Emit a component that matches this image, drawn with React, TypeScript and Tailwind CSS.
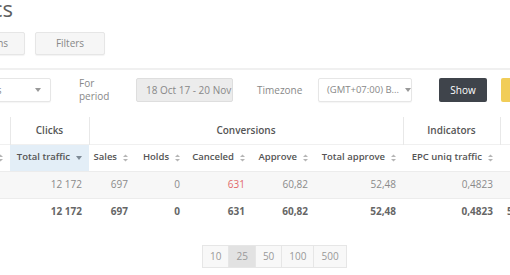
import { ReactNode } from 'react';

const font = { fontFamily: '"Open Sans", "Liberation Sans", sans-serif' };

function SortIcon({ active }: { active?: boolean }) {
  if (active) {
    return (
      <svg width="6" height="4" viewBox="0 0 6 4" className="ml-[6px] inline-block">
        <path d="M0 0h6L3 4z" fill="#7d8a96" />
      </svg>
    );
  }
  return (
    <svg width="5" height="8" viewBox="0 0 5 8" className="ml-[6px] inline-block">
      <path d="M0 3h5L2.5 0.5z" fill="#b5b5b5" />
      <path d="M0 5h5L2.5 7.5z" fill="#b5b5b5" />
    </svg>
  );
}

function Caret() {
  return (
    <svg width="6" height="4" viewBox="0 0 6 4" className="shrink-0">
      <path d="M0 0h6L3 4z" fill="#999" />
    </svg>
  );
}

const cols = [
  { key: 'traffic', label: 'Total traffic', w: 'w-[79px]', active: true },
  { key: 'sales', label: 'Sales', w: 'w-[46px]' },
  { key: 'holds', label: 'Holds', w: 'w-[52px]' },
  { key: 'canceled', label: 'Canceled', w: 'w-[65px]' },
  { key: 'approve', label: 'Approve', w: 'w-[63px]' },
  { key: 'totalApprove', label: 'Total approve', w: 'w-[88px]' },
  { key: 'epc', label: 'EPC uniq traffic', w: 'w-[97px]' },
];

const row: Record<string, string> = {
  traffic: '12 172',
  sales: '697',
  holds: '0',
  canceled: '631',
  approve: '60,82',
  totalApprove: '52,48',
  epc: '0,4823',
};

function Btn({ children, className }: { children: ReactNode; className: string }) {
  return (
    <button className={`h-[23px] rounded-[2px] border border-[#e6e6e6] bg-[#f6f6f6] text-[10px] text-[#888] shadow-[0_1px_1px_rgba(0,0,0,0.05)] ${className}`}>
      {children}
    </button>
  );
}

export default function App() {
  return (
    <div className="w-[510px] h-[275px] overflow-hidden bg-white" style={font}>
      <div className="-ml-[50px] w-[680px]">
        {/* Title */}
        <div className="-mt-[3px] flex h-[22px] w-[63px] justify-end whitespace-nowrap text-[22px] leading-[22px] text-[#5e5e5e]">
          Statistics
        </div>

        {/* Top buttons */}
        <div className="mt-[13px] flex gap-[10px]">
          <Btn className="w-[75px]">Columns</Btn>
          <Btn className="w-[70px]">Filters</Btn>
        </div>

        <div className="mt-[13px] h-[2px] bg-[#f0f0f0]" />

        {/* Filter row */}
        <div className="mt-[8px] flex h-[24px] items-center text-[10px] text-[#888]">
          <div className="ml-[5px] flex h-[24px] w-[96px] items-center justify-between rounded-[2px] border border-[#e6e6e6] bg-white pl-[10px] pr-[9px] shadow-[0_1px_1px_rgba(0,0,0,0.04)]">
            <span>By days</span>
            <Caret />
          </div>
          <div className="ml-[28px] w-[57px] leading-[13px]">
            For
            <br />
            period
          </div>
          <div className="flex h-[24px] w-[97px] items-center whitespace-nowrap rounded-[2px] border border-[#dedede] bg-[#ececec] pl-[9px]">
            18 Oct 17 - 20 Nov
          </div>
          <div className="ml-[24px] w-[61px]">Timezone</div>
          <div className="flex h-[24px] w-[94px] items-center gap-[6px] whitespace-nowrap rounded-[2px] border border-[#e6e6e6] bg-white pl-[8px] pr-[8px] shadow-[0_1px_1px_rgba(0,0,0,0.04)]">
            <span className="text-[9.5px]">(GMT+07:00) B...</span>
            <Caret />
          </div>
          <button className="ml-[27px] h-[24px] w-[48px] rounded-[2px] bg-[#3f444b] text-[10px] text-white">Show</button>
          <button className="ml-[14px] h-[24px] w-[60px] rounded-[2px] bg-[#f1cd58] text-[10px] text-white">Export</button>
        </div>

        {/* Table */}
        <table className="mt-[15px] table-fixed border-collapse text-[10px]">
          <thead>
            <tr className="h-[27px] text-[#555]">
              <th className="w-[60px] border-r border-[#e8e8e8]" />
              <th className="border-r border-[#e8e8e8] font-semibold">Clicks</th>
              <th colSpan={5} className="border-r border-[#e8e8e8] font-semibold">Conversions</th>
              <th className="border-r border-[#e8e8e8] font-semibold">Indicators</th>
              <th className="w-[110px] font-semibold" />
            </tr>
            <tr className="h-[27px] border-t border-[#f0f0f0] text-[#555]">
              <th className="w-[60px] whitespace-nowrap pr-[7px] text-right font-semibold">
                Date
                <SortIcon />
              </th>
              {cols.map(c => (
                <th
                  key={c.key}
                  className={`${c.w} whitespace-nowrap pr-[7px] text-right text-[9.5px] font-semibold ${c.active ? 'bg-[#e3eef7]' : ''}`}
                >
                  {c.label}
                  <SortIcon active={c.active} />
                </th>
              ))}
              <th className="w-[110px]" />
            </tr>
          </thead>
          <tbody>
            <tr className="h-[27px] border-t border-[#ececec] bg-[#f7f7f7] text-[#8a8a8a]">
              <td className="pl-[8px]">All</td>
              {cols.map(c => (
                <td key={c.key} className={`pr-[7px] text-right ${c.key === 'canceled' ? 'text-[#e26a6a]' : ''}`}>
                  {row[c.key]}
                </td>
              ))}
              <td />
            </tr>
            <tr className="h-[27px] border-t border-[#ececec] font-bold text-[#666]">
              <td className="pl-[8px]">Total</td>
              {cols.map(c => (
                <td key={c.key} className="pr-[7px] text-right">
                  {row[c.key]}
                </td>
              ))}
              <td className="pl-[7px]">57,11</td>
            </tr>
          </tbody>
        </table>

        {/* Pagination */}
        <div className="ml-[252px] mt-[20px] flex h-[23px] text-[10px] text-[#999]">
          {['10', '25', '50', '100', '500'].map(n => (
            <button
              key={n}
              className={`-ml-px h-[23px] border border-[#e6e6e6] px-[7px] first:ml-0 ${n === '25' ? 'bg-[#e2e2e2]' : 'bg-[#f8f8f8]'}`}
            >
              {n}
            </button>
          ))}
        </div>
      </div>
    </div>
  );
}
